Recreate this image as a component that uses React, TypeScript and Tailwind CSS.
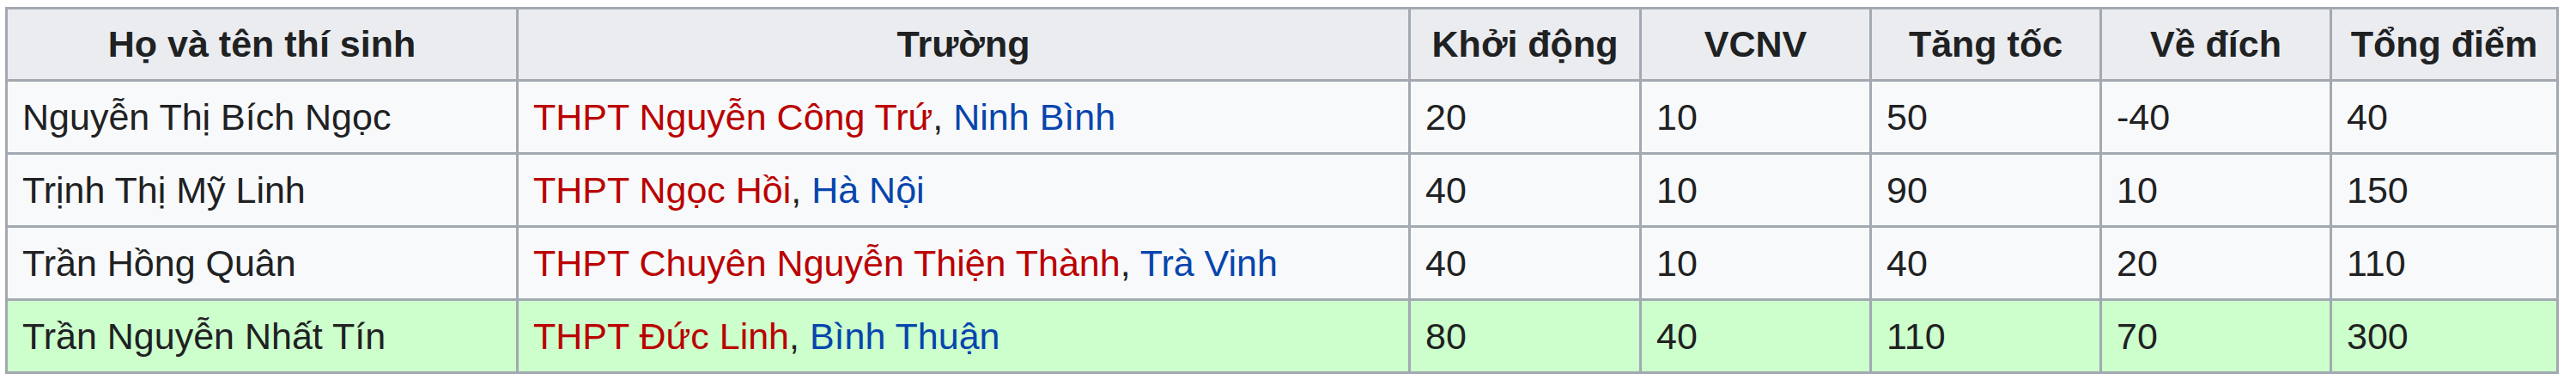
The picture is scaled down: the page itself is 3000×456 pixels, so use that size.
const rows = [
  {
    name: "Nguyễn Thị Bích Ngọc",
    school: "THPT Nguyễn Công Trứ",
    place: "Ninh Bình",
    scores: ["20", "10", "50", "-40", "40"],
    winner: false,
  },
  {
    name: "Trịnh Thị Mỹ Linh",
    school: "THPT Ngọc Hồi",
    place: "Hà Nội",
    scores: ["40", "10", "90", "10", "150"],
    winner: false,
  },
  {
    name: "Trần Hồng Quân",
    school: "THPT Chuyên Nguyễn Thiện Thành",
    place: "Trà Vinh",
    scores: ["40", "10", "40", "20", "110"],
    winner: false,
  },
  {
    name: "Trần Nguyễn Nhất Tín",
    school: "THPT Đức Linh",
    place: "Bình Thuận",
    scores: ["80", "40", "110", "70", "300"],
    winner: true,
  },
];

const headers = ["Họ và tên thí sinh", "Trường", "Khởi động", "VCNV", "Tăng tốc", "Về đích", "Tổng điểm"];
const widths = [595, 1039, 269, 268, 268, 268, 264];

export default function App() {
  return (
    <div className="h-[456px] w-[3000px] bg-white pt-[8px] pl-[6px] font-['Liberation_Sans',Arial,sans-serif] text-[43px] text-[#202122]">
      <table className="table-fixed border-collapse border-[3px] border-[#a2a9b1] bg-[#f8f9fa] w-[2974px]">
        <colgroup>
          {widths.map((w, i) => (
            <col key={i} style={{ width: w }} />
          ))}
        </colgroup>
        <thead>
          <tr className="bg-[#eaecf0]">
            {headers.map((h) => (
              <th
                key={h}
                className="border-[3px] border-[#a2a9b1] px-[17px] py-[8px] text-center font-bold leading-[65px] whitespace-nowrap"
              >
                {h}
              </th>
            ))}
          </tr>
        </thead>
        <tbody>
          {rows.map((r) => (
            <tr key={r.name} className={r.winner ? "bg-[#ccffcc]" : ""}>
              <td className="border-[3px] border-[#a2a9b1] px-[17px] py-[9px] leading-[64px] whitespace-nowrap">
                {r.name}
              </td>
              <td className="border-[3px] border-[#a2a9b1] px-[17px] py-[9px] leading-[64px] whitespace-nowrap">
                <span className="text-[#ba0000]">{r.school}</span>,{" "}
                <span className="text-[#0645ad]">{r.place}</span>
              </td>
              {r.scores.map((s, i) => (
                <td
                  key={i}
                  className="border-[3px] border-[#a2a9b1] px-[17px] py-[9px] leading-[64px] whitespace-nowrap"
                >
                  {s}
                </td>
              ))}
            </tr>
          ))}
        </tbody>
      </table>
    </div>
  );
}
